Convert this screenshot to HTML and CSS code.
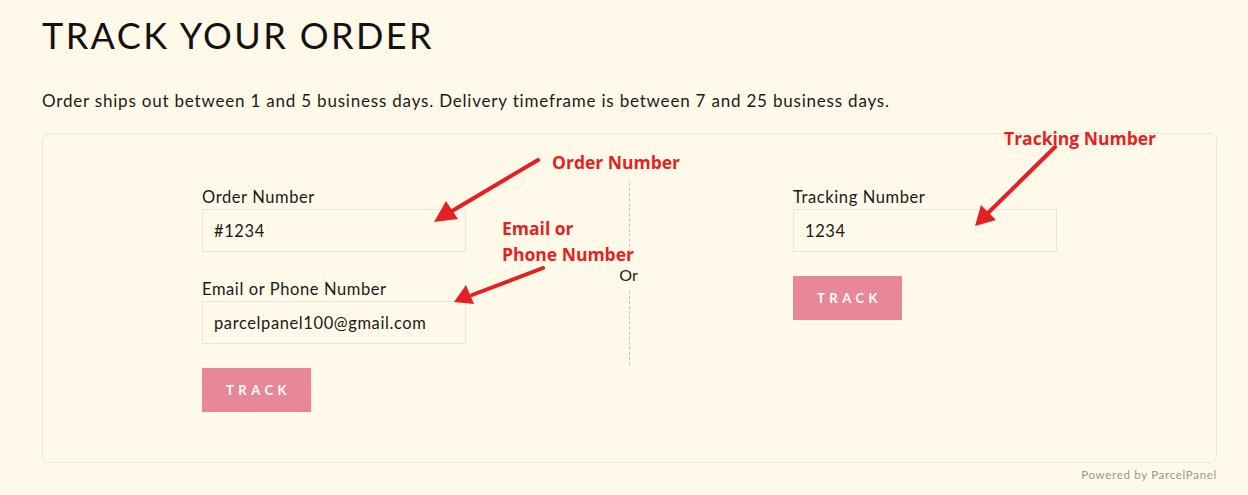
FILE: index.html
```html
<!DOCTYPE html>
<html>
<head>
<meta charset="utf-8">
<link rel="stylesheet" href="styles.css">
</head>
<body>
<div class="page">
  <h1 class="title">TRACK YOUR ORDER</h1>
  <p class="intro">Order ships out between 1 and 5 business days. Delivery timeframe is between 7 and 25 business days.</p>
  <div class="card">
    <div class="col">
      <label class="label">Order Number</label>
      <div class="input">#1234</div>
      <label class="label label-second">Email or Phone Number</label>
      <div class="input">parcelpanel100@gmail.com</div>
      <div class="btn">TRACK</div>
    </div>
    <div class="divider">
      <div class="dash"></div>
      <div class="or">Or</div>
      <div class="dash"></div>
    </div>
    <div class="col">
      <label class="label">Tracking Number</label>
      <div class="input">1234</div>
      <div class="btn">TRACK</div>
    </div>
  </div>
  <div class="powered">Powered by ParcelPanel</div>

  <div class="note note-order">Order Number</div>
  <div class="note note-email">Email or<br>Phone Number</div>
  <div class="note note-tracking">Tracking Number</div>
  <svg class="arrows" width="1248" height="495" viewBox="0 0 1248 495">
    <g stroke="#e51f24" stroke-width="4" fill="#e51f24" stroke-linecap="round">
      <line x1="538" y1="160" x2="452" y2="211"/>
      <polygon points="434,222 446,201 458,219" stroke="none"/>
      <line x1="543" y1="268" x2="472" y2="295"/>
      <polygon points="454,302 466,285 474,304" stroke="none"/>
      <line x1="1055" y1="147" x2="988" y2="213"/>
      <polygon points="975,226 981,205 996,220" stroke="none"/>
    </g>
  </svg>
</div>
</body>
</html>
```
FILE: styles.css
```css
html, body {
  margin: 0;
  padding: 0;
  background: #fff9e9;
}
.page {
  position: relative;
  width: 1248px;
  height: 495px;
  overflow: hidden;
  padding: 0 31px 0 42px;
  box-sizing: border-box;
  font-family: "Lato", "Open Sans", sans-serif;
  color: #111;
}
.title {
  margin: 0;
  padding-top: 15px;
  font-family: "Lato", sans-serif;
  font-weight: 400;
  font-size: 36px;
  letter-spacing: 2.4px;
  line-height: 40px;
  color: #121212;
}
.intro {
  margin: 35px 0 0;
  font-size: 17px;
  line-height: 22px;
  letter-spacing: 0.8px;
  color: #1a1a1a;
}
.card {
  margin-top: 21px;
  height: 330px;
  box-sizing: border-box;
  border: 1px solid #ebe7da;
  border-radius: 7px;
  display: flex;
  justify-content: center;
  padding-top: 52px;
}
.col {
  width: 264px;
  display: flex;
  flex-direction: column;
  align-items: flex-start;
}
.label {
  font-size: 16.5px;
  line-height: 22px;
  margin-bottom: 1px;
  letter-spacing: 0.6px;
  color: #1a1a1a;
}
.label-second {
  margin-top: 26px;
}
.input {
  width: 264px;
  height: 43px;
  box-sizing: border-box;
  border: 1px solid #e8e5dc;
  padding: 0 11px;
  display: flex;
  align-items: center;
  font-size: 16.5px;
  letter-spacing: 0.6px;
  color: #1a1a1a;
}
.btn {
  margin-top: 24px;
  width: 109px;
  height: 44px;
  background: #e88798;
  color: #fff;
  font-weight: 700;
  font-size: 13px;
  letter-spacing: 4.5px;
  display: flex;
  align-items: center;
  justify-content: center;
  padding-left: 4px;
  box-sizing: border-box;
}
.divider {
  width: 1px;
  margin: -3px 163px 0 163px;
  display: flex;
  flex-direction: column;
  align-items: center;
  height: 182px;
}
.dash {
  flex: 1;
  border-left: 1px dashed #c9c3b6;
}
.or {
  font-size: 16px;
  line-height: 22px;
  padding: 7px 0 5px;
  margin-right: 2px;
  color: #1a1a1a;
}
.powered {
  text-align: right;
  font-size: 11.5px;
  color: #9a968e;
  margin-top: 5px;
  letter-spacing: 0.7px;
}
.note {
  position: absolute;
  font-family: "Open Sans", sans-serif;
  font-weight: 700;
  font-size: 17.5px;
  line-height: 26px;
  color: #e51f24;
}
.note-order { left: 552px; top: 149px; }
.note-email { left: 502px; top: 215px; }
.note-tracking { left: 1004px; top: 125px; }
.arrows {
  position: absolute;
  left: 0;
  top: 0;
  pointer-events: none;
}
```
